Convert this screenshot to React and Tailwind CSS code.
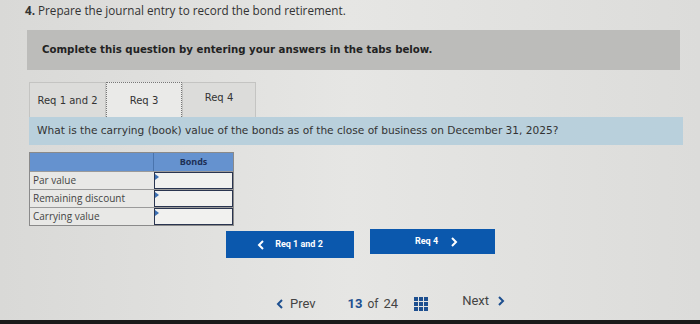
import React from 'react'

const ROWS = ['Par value', 'Remaining discount', 'Carrying value']

function Chevron({ dir = 'left', className = '' }) {
  return (
    <svg width="8" height="10" viewBox="0 0 8 10" className={className}>
      <path
        d={dir === 'left' ? 'M6 1 L2 5 L6 9' : 'M2 1 L6 5 L2 9'}
        fill="none"
        stroke="currentColor"
        strokeWidth="2"
      />
    </svg>
  )
}

function GridIcon() {
  return (
    <svg width="14" height="14" viewBox="0 0 14 14" className="text-[#1d4f8f]">
      {[0, 5, 10].map(y =>
        [0, 5, 10].map(x => <rect key={`${x}-${y}`} x={x} y={y} width="4" height="4" fill="currentColor" />)
      )}
    </svg>
  )
}

export default function App() {
  return (
    <div
      className="w-[700px] h-[324px] overflow-hidden flex flex-col bg-gradient-to-r from-[#d9d9d7] via-[#e6e6e4] to-[#dcdcda] text-[#2b2b2b]"
      style={{ fontFamily: '"Open Sans", "DejaVu Sans", sans-serif' }}
    >
      <div className="pl-[25px] pt-[2px] h-[30px] text-[11.7px] text-[#333]">
        <span className="font-bold">4.</span> Prepare the journal entry to record the bond retirement.
      </div>

      <div className="ml-[27px] mr-[20px] h-[40px] bg-[#bcbcba] flex items-center pl-[15px] text-[10.2px] font-bold text-[#222]" style={{ fontFamily: '"DejaVu Sans", Verdana, sans-serif' }}>
        Complete this question by entering your answers in the tabs below.
      </div>

      <div className="ml-[29px] mt-[12px] flex h-[35px] text-[10px] text-[#333]" style={{ fontFamily: '"DejaVu Sans", Verdana, sans-serif' }}>
        <div className="w-[77px] flex items-center justify-center bg-[#dcdcda] border border-[#c4c4c2] border-b-0">Req 1 and 2</div>
        <div className="w-[76px] flex items-center justify-center bg-[#eaeae8] border border-dotted border-[#777] border-b-0">Req 3</div>
        <div className="w-[74px] flex items-center justify-center bg-[#dcdcda] border border-[#c4c4c2] border-b-0 pb-[6px]">Req 4</div>
      </div>

      <div className="ml-[29px] mr-[17px] h-[28px] bg-[#b9d0dc] flex items-center pl-[8px] text-[10.6px] text-[#333]" style={{ fontFamily: '"DejaVu Sans", Verdana, sans-serif' }}>
        What is the carrying (book) value of the bonds as of the close of business on December 31, 2025?
      </div>

      <div className="ml-[29px] mt-[7px] w-[205px] border border-[#8a8a8a] text-[10px]">
        <div className="flex h-[18px] bg-[#6592cf]">
          <div className="w-[124px] border-r border-[#4a74ad]" />
          <div className="flex-1 flex items-center justify-center font-bold text-[#1d2f55] text-[9px]">Bonds</div>
        </div>
        {ROWS.map(r => (
          <div key={r} className="flex h-[18px] border-t border-[#9a9a9a] bg-[#e8e8e6]">
            <div className="w-[124px] flex items-center pl-[3px] text-[#444]">{r}</div>
            <div className="flex-1 relative border-[1.5px] border-[#2a3550] bg-[#f1f1ef]">
              <div className="absolute left-0 top-[1px] w-0 h-0 border-t-[3px] border-b-[3px] border-l-[4px] border-t-transparent border-b-transparent border-l-[#3b6fb3]" />
            </div>
          </div>
        ))}
      </div>

      <div className="flex ml-[226px] mt-[3px] gap-[16px] items-start text-[9px] font-bold text-white" style={{ fontFamily: 'Roboto, "Liberation Sans", sans-serif' }}>
        <div className="w-[128px] h-[27px] mt-[2px] bg-[#0b58ad] flex items-center justify-center gap-[10px]">
          <Chevron dir="left" />
          <span>Req 1 and 2</span>
        </div>
        <div className="w-[125px] h-[25px] bg-[#0b58ad] flex items-center justify-center gap-[12px] pl-[8px]">
          <span>Req 4</span>
          <Chevron dir="right" />
        </div>
      </div>

      <div className="flex items-center ml-[276px] mt-[36px] text-[13px] text-[#444]" style={{ fontFamily: 'Roboto, "Liberation Sans", sans-serif' }}>
        <Chevron dir="left" className="text-[#1d4f8f]" />
        <span className="ml-[6px]">Prev</span>
        <span className="ml-[32px] font-bold text-[#1d4f8f]">13</span>
        <span className="ml-[5px] text-[12px]">of</span>
        <span className="ml-[5px]">24</span>
        <span className="ml-[16px]"><GridIcon /></span>
        <span className="ml-[34px] -mt-[6px]">Next</span>
        <Chevron dir="right" className="ml-[8px] -mt-[6px] text-[#1d4f8f]" />
      </div>

      <div className="mt-auto h-[4px] bg-[#1a1a1a]" />
    </div>
  )
}
